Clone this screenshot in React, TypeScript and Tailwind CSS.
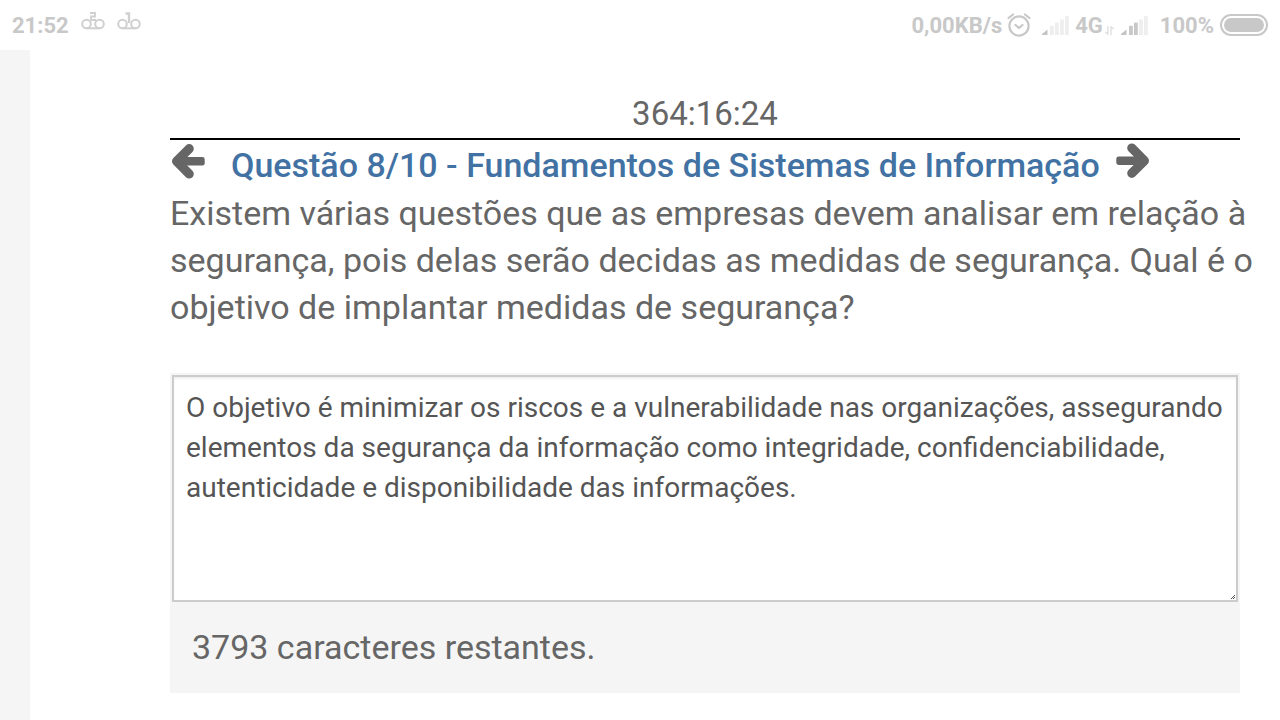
import { useState } from "react";

const LIMIT = 4000;

function Voicemail({ digit }: { digit: "1" | "2" }) {
  return (
    <svg width="24" height="20" viewBox="0 0 24 20" fill="none" stroke="#d0d0d0" strokeWidth="2" aria-hidden="true">
      <circle cx="5.5" cy="13" r="4.3" />
      <circle cx="18.5" cy="13" r="4.3" />
      <path d="M5.5 17.3h13" />
      {digit === "2" ? <path d="M9 2h5v3.5h-4V9h5" strokeWidth="1.8" /> : <path d="M8.5 2.5H12V12" strokeWidth="2.4" />}
    </svg>
  );
}

function Signal({ level }: { level: number }) {
  return (
    <svg width="28" height="20" viewBox="0 0 28 20" aria-hidden="true">
      <path d="M0 20v-1l5.5-4.5V20z" fill="#c4c4c4" />
      {[1, 2, 3, 4].map((i) => (
        <rect key={i} x={3 + i * 5} y={14 - i * 3.2} width="3.8" height={6 + i * 3.2} fill={i < level ? "#c8c8c8" : "#eeeeee"} />
      ))}
    </svg>
  );
}

function Alarm() {
  return (
    <svg width="24" height="24" viewBox="0 0 24 24" fill="none" stroke="#c8c8c8" strokeWidth="2.2" strokeLinecap="round" strokeLinejoin="round" aria-hidden="true">
      <circle cx="12" cy="13" r="9.6" />
      <path d="M8.5 12l3.5 3 3.5-3M1.5 5L6 1.5M22.5 5L18 1.5" />
    </svg>
  );
}

function Arrow({ direction }: { direction: "left" | "right" }) {
  return (
    <svg width="36" height="36" viewBox="0 0 36 36" fill="none" aria-hidden="true" className={direction === "right" ? "rotate-180" : ""}>
      <path d="M19.2 5.7L6.6 18.3L19.2 30.9" stroke="#666666" strokeWidth="9.2" strokeLinecap="round" strokeLinejoin="round" />
      <rect x="6" y="14" width="28.7" height="8.6" rx="2.4" fill="#666666" />
    </svg>
  );
}

function StatusBar() {
  return (
    <header className="flex h-[50px] items-center justify-between px-3 text-[22px] leading-[30px] font-bold text-[#c8c8c8]">
      <div className="flex items-center gap-3">
        <span className="pt-[2px]">21:52</span>
        <div className="flex gap-3 pb-[8px]">
          <Voicemail digit="2" />
          <Voicemail digit="1" />
        </div>
      </div>
      <div className="flex items-center">
        <span className="pt-[2px]">0,00KB/s</span>
        <span className="ml-[5px]"><Alarm /></span>
        <span className="ml-[11px]"><Signal level={1} /></span>
        <span className="ml-[5px] pt-[2px]">4G</span>
        <svg className="mt-[10px] ml-[2px]" width="9" height="9" viewBox="0 0 9 9" fill="none" stroke="#dcdcdc" strokeWidth="1.2" aria-hidden="true">
          <path d="M2.8 0v8.2L.4 6M6 9V.8L8.6 3" />
        </svg>
        <span className="ml-[7px]"><Signal level={3} /></span>
        <span className="ml-[11px] pt-[2px]">100%</span>
        <svg className="ml-[6px]" width="48" height="22" viewBox="0 0 48 22" aria-hidden="true">
          <rect x="1" y="1" width="46" height="20" rx="10" fill="none" stroke="#c8c8c8" strokeWidth="2" />
          <rect x="4" y="4" width="40" height="14" rx="7" fill="#c8c8c8" />
        </svg>
      </div>
    </header>
  );
}

export default function App() {
  const [answer, setAnswer] = useState(
    "O objetivo é minimizar os riscos e a vulnerabilidade nas organizações, assegurando elementos da segurança da informação como integridade, confidenciabilidade, autenticidade e disponibilidade das informações."
  );

  return (
    <div className="flex min-h-screen flex-col bg-white font-[Roboto,sans-serif] text-[#666666]">
      <StatusBar />
      <div className="flex flex-1">
        <aside className="w-[30px] shrink-0 bg-[#f5f5f5]" />
        <main className="min-w-0 flex-1 pt-[44px] pr-10 pl-[140px]">
          <div className="border-b-2 border-black pb-1 text-center text-[33px] leading-[40px]">364:16:24</div>
          <div className="flex h-[50px] items-center">
            <button type="button" aria-label="Questão anterior" className="mb-[8px] shrink-0">
              <Arrow direction="left" />
            </button>
            <h1 className="ml-[25px] text-[34px] leading-[44px] font-medium whitespace-nowrap text-[#4272a4]">
              Questão 8/10 - Fundamentos de Sistemas de Informação
            </h1>
            <button type="button" aria-label="Próxima questão" className="mb-[8px] ml-[15px] shrink-0">
              <Arrow direction="right" />
            </button>
          </div>
          <label htmlFor="answer" className="-mr-4 block text-[34px] leading-[47px]">
            Existem várias questões que as empresas devem analisar em relação à segurança, pois delas serão decidas as
            medidas de segurança. Qual é o objetivo de implantar medidas de segurança?
          </label>
          <section className="mt-[42px] bg-[#f5f5f5]">
            <div className="relative p-[2px]">
              <textarea
                id="answer"
                value={answer}
                maxLength={LIMIT}
                onChange={(e) => setAnswer(e.target.value)}
                className="block h-[227px] w-full resize-none border-2 border-[#cccccc] bg-white px-3 py-[11px] text-[28px] leading-[40px] text-[#555555] shadow-[inset_0_2px_2px_rgba(0,0,0,0.06)] outline-none"
              />
              <svg className="absolute right-[5px] bottom-[5px]" width="4" height="4" viewBox="0 0 4 4" fill="#555555" aria-hidden="true">
                <path d="M3 0h1v1H3zM2 1h1v1H2zM1 2h1v1H1zM3 2h1v1H3zM0 3h1v1H0zM2 3h1v1H2z" />
              </svg>
            </div>
            <p className="px-[22px] pt-5 pb-[22px] text-[34px] leading-[47px]">
              {LIMIT - answer.length} caracteres restantes.
            </p>
          </section>
        </main>
      </div>
    </div>
  );
}
